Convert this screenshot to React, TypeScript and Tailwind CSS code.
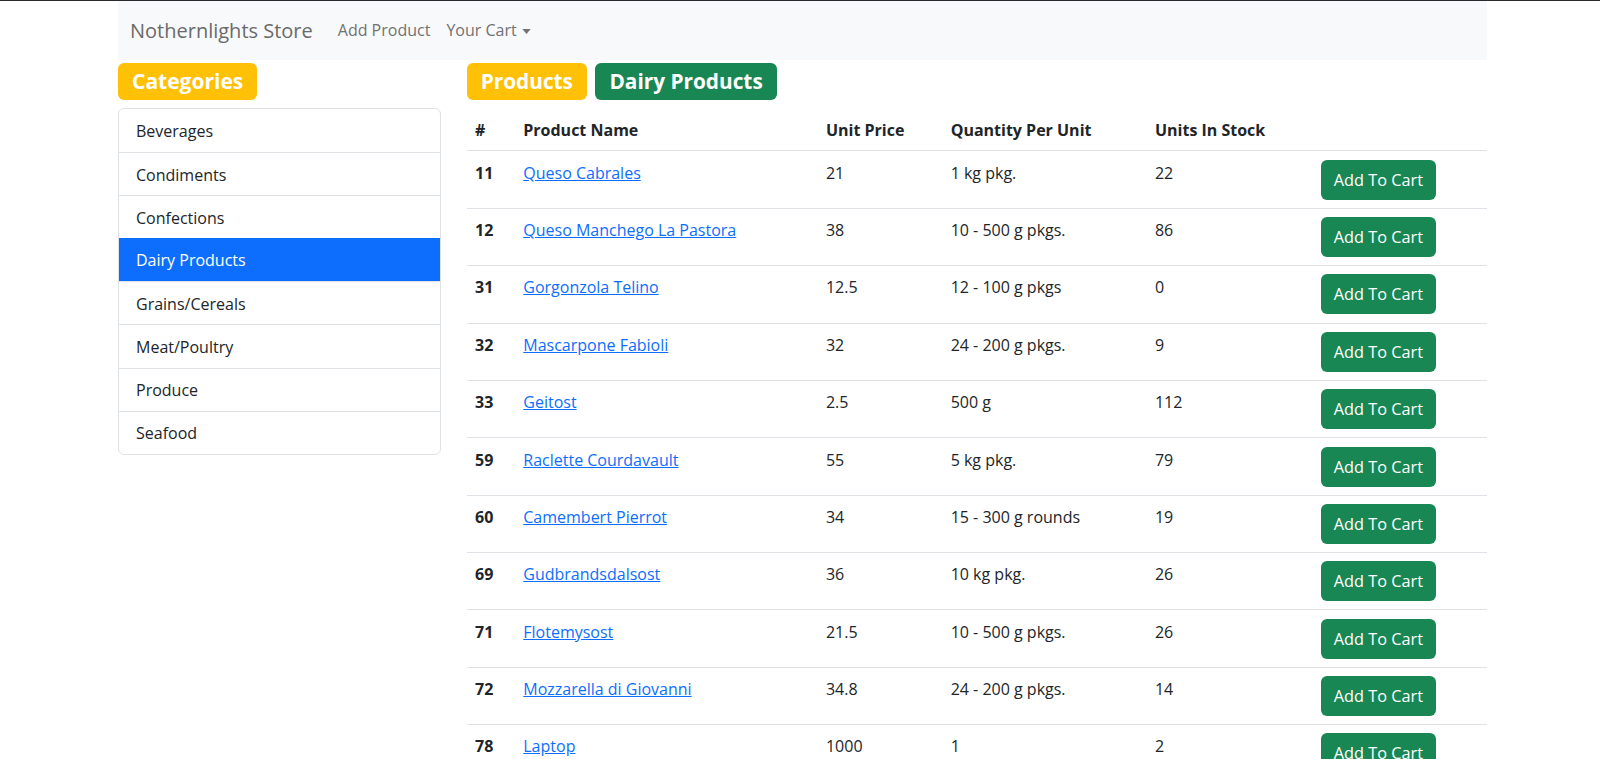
type Product = {
  id: number;
  name: string;
  price: string;
  qty: string;
  stock: number;
};

const categories = [
  'Beverages',
  'Condiments',
  'Confections',
  'Dairy Products',
  'Grains/Cereals',
  'Meat/Poultry',
  'Produce',
  'Seafood',
];

const products: Product[] = [
  { id: 11, name: 'Queso Cabrales', price: '21', qty: '1 kg pkg.', stock: 22 },
  { id: 12, name: 'Queso Manchego La Pastora', price: '38', qty: '10 - 500 g pkgs.', stock: 86 },
  { id: 31, name: 'Gorgonzola Telino', price: '12.5', qty: '12 - 100 g pkgs', stock: 0 },
  { id: 32, name: 'Mascarpone Fabioli', price: '32', qty: '24 - 200 g pkgs.', stock: 9 },
  { id: 33, name: 'Geitost', price: '2.5', qty: '500 g', stock: 112 },
  { id: 59, name: 'Raclette Courdavault', price: '55', qty: '5 kg pkg.', stock: 79 },
  { id: 60, name: 'Camembert Pierrot', price: '34', qty: '15 - 300 g rounds', stock: 19 },
  { id: 69, name: 'Gudbrandsdalsost', price: '36', qty: '10 kg pkg.', stock: 26 },
  { id: 71, name: 'Flotemysost', price: '21.5', qty: '10 - 500 g pkgs.', stock: 26 },
  { id: 72, name: 'Mozzarella di Giovanni', price: '34.8', qty: '24 - 200 g pkgs.', stock: 14 },
  { id: 78, name: 'Laptop', price: '1000', qty: '1', stock: 2 },
];

export default function App() {
  const active = 'Dairy Products';

  return (
    <div className="min-h-screen bg-white font-['Open_Sans','Noto_Sans',sans-serif] text-[16px] leading-[25px] text-[#212529]">
      <div className="h-px bg-[#2a2a2e]" />

      <div className="ml-[118px] w-[1369px]">
        {/* navbar */}
        <nav className="flex h-[59px] items-center bg-[#f8f9fa] pl-[12px]">
          <span className="mr-[25px] text-[20px] text-[#6a6a6a]">Nothernlights Store</span>
          <span className="mr-[16px] text-[16px] text-[#727272]">Add Product</span>
          <span className="flex items-center text-[16px] text-[#727272]">
            Your Cart
            <svg viewBox="0 0 10 6" className="ml-[5px] mt-[1px] h-[5px] w-[9px] fill-[#727272]">
              <path d="M0 0h10L5 6z" />
            </svg>
          </span>
        </nav>

        <div className="flex gap-[25.7px]">
          {/* sidebar */}
          <aside className="w-[323px] shrink-0">
            <div className="mt-[3px] inline-block h-[37px] rounded-[6px] bg-[#ffc107] px-[14px] text-[21px] font-bold leading-[37px] text-white">
              Categories
            </div>
            <ul className="mt-[8px] overflow-hidden rounded-[6px] border border-[#dee2e6]">
              {categories.map((c, i) => (
                <li
                  key={c}
                  className={
                    c === active
                      ? 'h-[43.1px] bg-[#0d6efd] px-[17px] pt-[9.5px] text-white'
                      : 'h-[43.1px] px-[17px] pt-[9.5px] text-[#212529] ' + (i > 0 ? 'border-t border-[#dee2e6]' : '')
                  }
                >
                  {c}
                </li>
              ))}
            </ul>
          </aside>

          {/* products */}
          <main className="flex-1">
            <div className="mt-[3px] flex gap-[8.5px]">
              <span className="h-[37px] rounded-[6px] bg-[#ffc107] px-[14px] text-[20.8px] font-bold leading-[37px] text-white">
                Products
              </span>
              <span className="h-[37px] rounded-[6px] bg-[#198754] px-[14px] text-[20.8px] font-bold leading-[37px] text-white">
                Dairy Products
              </span>
            </div>

            <table className="mt-[8.5px] w-full table-fixed border-collapse text-left">
              <colgroup>
                <col className="w-[48.2px]" />
                <col className="w-[302.7px]" />
                <col className="w-[124.7px]" />
                <col className="w-[204.3px]" />
                <col className="w-[166px]" />
                <col />
              </colgroup>
              <thead>
                <tr className="border-b border-[#dee2e6] align-top">
                  <th className="px-[8.4px] pb-[7.6px] pt-[9.4px] font-bold">#</th>
                  <th className="px-[8.4px] pb-[7.6px] pt-[9.4px] font-bold">Product Name</th>
                  <th className="px-[8.4px] pb-[7.6px] pt-[9.4px] font-bold">Unit Price</th>
                  <th className="px-[8.4px] pb-[7.6px] pt-[9.4px] font-bold">Quantity Per Unit</th>
                  <th className="px-[8.4px] pb-[7.6px] pt-[9.4px] font-bold">Units In Stock</th>
                  <th className="px-[8.4px] pb-[7.6px] pt-[9.4px]" />
                </tr>
              </thead>
              <tbody>
                {products.map((p) => (
                  <tr key={p.id} className="border-b border-[#dee2e6] align-top">
                    <td className="px-[8.4px] py-[8.2px] font-bold">
                      <div className="pt-[1px]">{p.id}</div>
                    </td>
                    <td className="px-[8.4px] py-[8.2px]">
                      <div className="pt-[1px]">
                        <a href="#" className="text-[#0d6efd] underline">
                          {p.name}
                        </a>
                      </div>
                    </td>
                    <td className="px-[8.4px] py-[8.2px]">
                      <div className="pt-[1px]">{p.price}</div>
                    </td>
                    <td className="px-[8.4px] py-[8.2px]">
                      <div className="pt-[1px]">{p.qty}</div>
                    </td>
                    <td className="px-[8.4px] py-[8.2px]">
                      <div className="pt-[1px]">{p.stock}</div>
                    </td>
                    <td className="px-[8.4px] py-[8.2px]">
                      <button className="h-[40px] w-[115px] rounded-[6px] bg-[#198754] pt-[1px] text-[16.3px] text-white">
                        Add To Cart
                      </button>
                    </td>
                  </tr>
                ))}
              </tbody>
            </table>
          </main>
        </div>
      </div>
    </div>
  );
}
